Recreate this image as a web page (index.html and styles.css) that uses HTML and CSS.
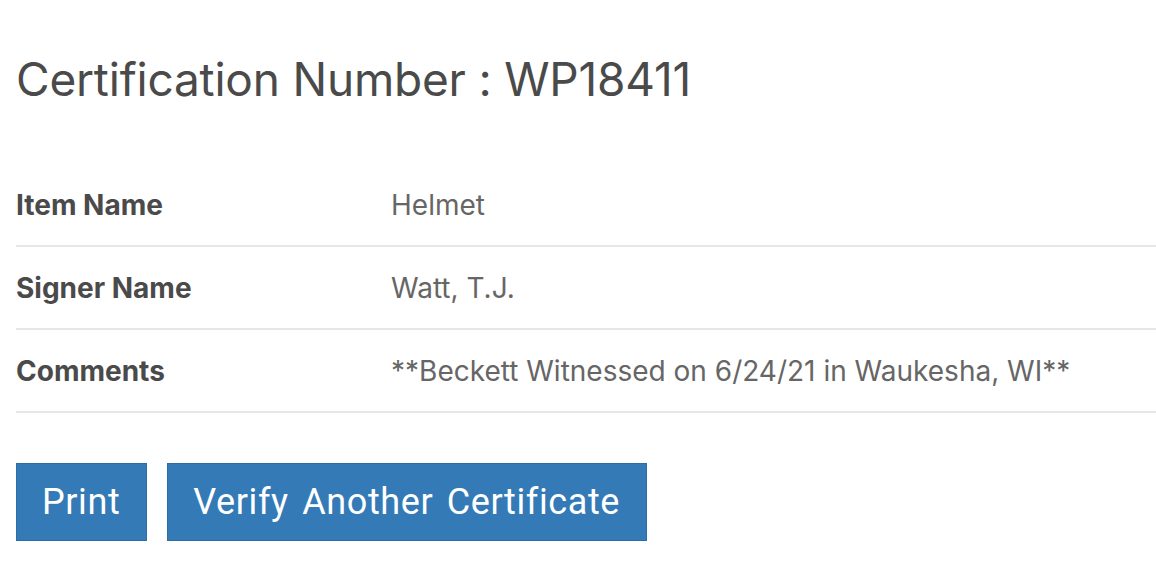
FILE: index.html
```html
<!DOCTYPE html>
<html>
<head>
<meta charset="utf-8">
<link rel="stylesheet" href="styles.css">
</head>
<body>
<main class="page">
  <h1 class="title">Certification Number : WP18411</h1>
  <table class="details">
    <tr><th>Item Name</th><td>Helmet</td></tr>
    <tr><th>Signer Name</th><td>Watt, T.J.</td></tr>
    <tr><th>Comments</th><td>**Beckett Witnessed on 6/24/21 in Waukesha, WI**</td></tr>
  </table>
  <div class="actions">
    <button class="btn">Print</button>
    <button class="btn">Verify Another Certificate</button>
  </div>
</main>
</body>
</html>
```
FILE: styles.css
```css
html, body { margin: 0; padding: 0; background: #fff; }
.page { padding: 0 0 0 16px; font-family: Inter, "Noto Sans", sans-serif; color: #555; }
.title {
  margin: 0; padding-top: 54px; height: 110px; box-sizing: content-box;
  font-family: Inter, sans-serif; font-weight: 400; font-size: 46px; line-height: 50px;
  color: #4a4a4a; letter-spacing: -0.2px;
}
.details { width: 100%; border-collapse: collapse; }
.details th, .details td {
  height: 81px; padding: 0; border-bottom: 2px solid #e6e6e6;
  font-size: 28px; text-align: left; vertical-align: middle;
}
.details th { width: 375px; font-weight: 700; color: #4a4a4a; }
.details td { color: #666; font-weight: 400; }
.actions { display: flex; gap: 20px; padding-top: 50px; }
.btn {
  font-family: Roboto, sans-serif; font-size: 36px; letter-spacing: 0.6px; word-spacing: 4px; color: #fff;
  background: #337ab7; border: 1px solid #2e6da4; border-radius: 0;
  height: 78px; padding: 0 26px 0 25px; cursor: pointer;
}
```
